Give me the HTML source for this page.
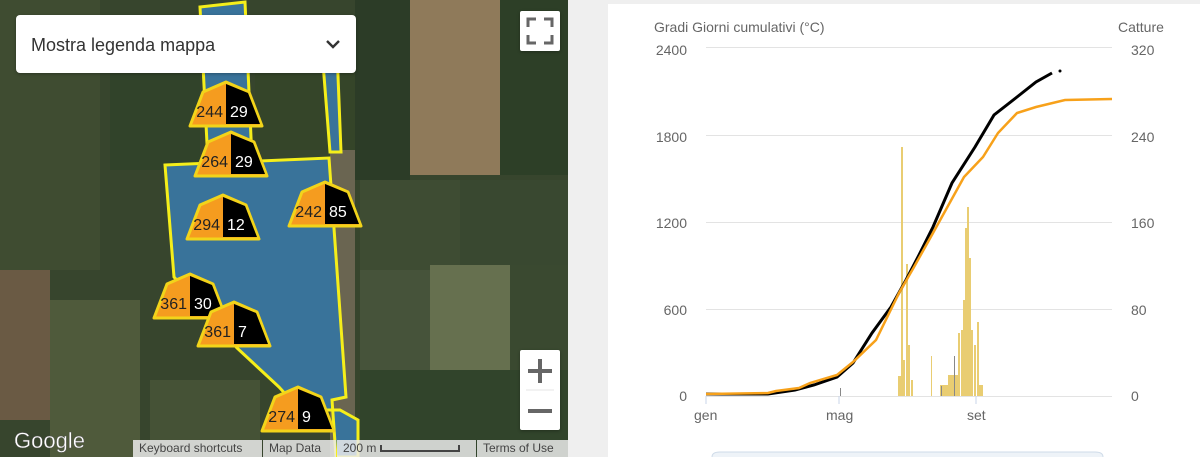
<!DOCTYPE html>
<html><head><meta charset="utf-8"><style>
*{margin:0;padding:0;box-sizing:border-box}
body{width:1200px;height:457px;overflow:hidden;background:#fff;font-family:"Liberation Sans",Arial,sans-serif;position:relative}
#map{position:absolute;left:0;top:0;width:568px;height:457px;overflow:hidden;background:#3b4a30}
#gap{position:absolute;left:568px;top:0;width:40px;height:457px;background:#efefef}
#topgap{position:absolute;left:568px;top:0;width:632px;height:4px;background:#efefef}
.mk{position:absolute;width:76px;height:48px}
.legend{position:absolute;left:16px;top:15px;width:340px;height:58px;background:#fff;border-radius:4px;box-shadow:0 1px 3px rgba(0,0,0,.3)}
.legend .t{position:absolute;left:15px;top:20px;font-size:18px;color:#333}
.btn{position:absolute;background:#fff;border-radius:2px;box-shadow:0 1px 3px rgba(0,0,0,.3)}
.foot{position:absolute;top:440px;height:17px;background:rgba(235,235,235,.85);font-size:12px;color:#444;line-height:17px;padding:0 6px}
.lbl{position:absolute;font-size:14px;color:#666}
</style></head><body>
<div id="map">
<svg width="568" height="457" style="position:absolute;left:0;top:0">
<rect width="568" height="457" fill="#37452d"/>
<rect x="0" y="0" width="100" height="270" fill="#3f4c31"/>
<rect x="0" y="270" width="50" height="150" fill="#6a5a44"/>
<rect x="50" y="300" width="90" height="157" fill="#4f5a3b"/>
<rect x="110" y="60" width="90" height="110" fill="#31432a"/>
<rect x="255" y="40" width="110" height="110" fill="#354529"/>
<rect x="355" y="0" width="55" height="180" fill="#2c3c27"/>
<rect x="410" y="0" width="90" height="175" fill="#8f7a5a"/>
<rect x="500" y="0" width="68" height="175" fill="#2d3f27"/>
<rect x="360" y="180" width="100" height="90" fill="#3e4c33"/>
<rect x="460" y="180" width="108" height="90" fill="#394830"/>
<rect x="360" y="270" width="70" height="100" fill="#46533a"/>
<rect x="430" y="265" width="80" height="105" fill="#66704f"/>
<rect x="510" y="265" width="58" height="105" fill="#3a4930"/>
<rect x="360" y="370" width="208" height="87" fill="#31442b"/>
<rect x="330" y="150" width="25" height="307" fill="#6a6551"/>
<rect x="150" y="380" width="110" height="77" fill="#455236"/>
<path d="M200,7 L245,2 L252,160 L208,163 Z" fill="#39739a" stroke="#f5ee1a" stroke-width="3"/>
<path d="M320,25 L336,25 L341,152 L330,152 Z" fill="#39739a" stroke="#f5ee1a" stroke-width="3"/>
<path d="M165,165 L329,158 L346,397 L332,400 L336,457 L358,457 L358,420 L340,410 L300,410 L279,387 L237,348 L174,277 Z" fill="#39739a" stroke="#f5ee1a" stroke-width="3"/>
<text x="14" y="448" font-size="22" fill="#fff" font-family="Liberation Sans" stroke="#555" stroke-width="0.4">Google</text>
</svg>

<div class="legend"><div class="t">Mostra legenda mappa</div>
<svg style="position:absolute;left:308px;top:22px" width="18" height="14"><path d="M3,4 L9,10 L15,4" fill="none" stroke="#333" stroke-width="2.4"/></svg></div>
<div class="btn" style="left:520px;top:11px;width:40px;height:40px"><svg width="40" height="40"><path d="M8,16 V8 H16 M24,8 H32 V16 M32,24 V32 H24 M16,32 H8 V24" fill="none" stroke="#666" stroke-width="3"/></svg></div>
<div class="btn" style="left:520px;top:350px;width:40px;height:80px"><svg width="40" height="80"><path d="M8,21 H32 M20,9 V33" stroke="#666" stroke-width="4"/><path d="M6,40 H34" stroke="#e6e6e6" stroke-width="1"/><path d="M8,61 H32" stroke="#666" stroke-width="4"/></svg></div>

<div class="foot" style="left:133px;width:129px">Keyboard shortcuts</div>
<div class="foot" style="left:263px;width:73px">Map Data</div>
<div class="foot" style="left:337px;width:139px">200 m <span style="display:inline-block;width:80px;height:7px;border:2px solid #444;border-top:none;vertical-align:middle"></span></div>
<div class="foot" style="left:477px;width:91px">Terms of Use</div>
</div>
<div id="gap"></div><div id="topgap"></div>

<div id="markers"></div>
<script>
var m=[[188,80,"244","29"],[193,130,"264","29"],[185,193,"294","12"],[287,180,"242","85"],[152,272,"361","30"],[196,300,"361","7"],[260,385,"274","9"]];
var h="";
m.forEach(function(a){h+='<svg class="mk" style="left:'+a[0]+'px;top:'+a[1]+'px" viewBox="0 0 76 48"><polygon points="38,2 61,12 74,46 2,46 15,12" fill="#f59c1f" stroke="#f2d41a" stroke-width="3" stroke-linejoin="round"/><polygon points="38,4 60,13 72,44 38,44" fill="#000"/><text x="35" y="37" text-anchor="end" font-size="16" fill="#222" font-family="Liberation Sans">'+a[2]+'</text><text x="42" y="37" font-size="16" fill="#fff" font-family="Liberation Sans">'+a[3]+'</text></svg>';});
document.getElementById("markers").innerHTML=h;
</script>

<div class="lbl" style="left:654px;top:19px">Gradi Giorni cumulativi (°C)</div>
<div class="lbl" style="left:1118px;top:19px">Catture</div>
<div class="lbl" style="left:654px;top:42px;width:33px;text-align:right">2400</div>
<div class="lbl" style="left:654px;top:129px;width:33px;text-align:right">1800</div>
<div class="lbl" style="left:654px;top:215px;width:33px;text-align:right">1200</div>
<div class="lbl" style="left:654px;top:302px;width:33px;text-align:right">600</div>
<div class="lbl" style="left:654px;top:388px;width:33px;text-align:right">0</div>
<div class="lbl" style="left:1131px;top:42px">320</div>
<div class="lbl" style="left:1131px;top:129px">240</div>
<div class="lbl" style="left:1131px;top:215px">160</div>
<div class="lbl" style="left:1131px;top:302px">80</div>
<div class="lbl" style="left:1131px;top:388px">0</div>
<div class="lbl" style="left:694px;top:407px">gen</div>
<div class="lbl" style="left:826px;top:407px">mag</div>
<div class="lbl" style="left:967px;top:407px">set</div>
<svg width="1200" height="457" style="position:absolute;left:0;top:0">
<g stroke="#e3e3e3" stroke-width="1">
<line x1="706" y1="47.5" x2="1112" y2="47.5"/><line x1="706" y1="135.5" x2="1112" y2="135.5"/><line x1="706" y1="222.5" x2="1112" y2="222.5"/><line x1="706" y1="309.5" x2="1112" y2="309.5"/><line x1="706" y1="396.5" x2="1112" y2="396.5"/>
</g>
<g stroke="#c8d6e8"><line x1="706" y1="396" x2="706" y2="404"/><line x1="839" y1="396" x2="839" y2="404"/><line x1="976" y1="396" x2="976" y2="404"/></g>
<g fill="#e9cd72">
<rect x="901" y="147" width="2" height="249"/><rect x="898" y="376" width="3" height="20"/><rect x="903" y="360" width="2" height="36"/>
<rect x="906" y="264" width="2" height="132"/><rect x="908" y="345" width="2" height="51"/><rect x="911" y="380" width="2" height="16"/>
<rect x="931" y="356" width="1" height="40"/>
<rect x="958" y="333" width="2" height="63"/><rect x="961" y="330" width="2" height="66"/><rect x="963" y="300" width="2" height="96"/>
<rect x="965" y="228" width="2" height="168"/><rect x="967" y="207" width="2" height="189"/><rect x="969" y="258" width="2" height="138"/>
<rect x="971" y="330" width="2" height="66"/><rect x="974" y="345" width="2" height="51"/><rect x="977" y="322" width="2" height="74"/>
<rect x="979" y="385" width="4" height="11"/><rect x="948" y="375" width="10" height="21"/><rect x="940" y="385" width="8" height="11"/>
</g>
<g fill="#888"><rect x="954" y="356" width="1" height="40"/><rect x="941" y="386" width="1" height="10"/><rect x="840" y="388" width="1" height="8"/></g>
<path d="M706,394 L768,394 L795,390 L814,385 L837,377 L853,363 L872,333 L891,307 L906,280 L918,257 L933,227 L952,183 L975,147 L994,115 L1017,97 L1036,82 L1052,73" fill="none" stroke="#000" stroke-width="3"/>
<circle cx="1060" cy="71" r="1.5" fill="#000"/>
<path d="M706,394 L768,393 L776,391 L799,388 L810,383 L837,375 L853,362 L876,340 L899,293 L914,267 L933,233 L964,177 L983,157 L998,133 L1017,113 L1036,107 L1065,100 L1112,99" fill="none" stroke="#f7a11a" stroke-width="2.5"/>
<path d="M712,457 Q712,452 720,452 L1095,452 Q1103,452 1103,457" fill="#eef3f8" stroke="#cfdbe8"/>
</svg>
</body></html>
